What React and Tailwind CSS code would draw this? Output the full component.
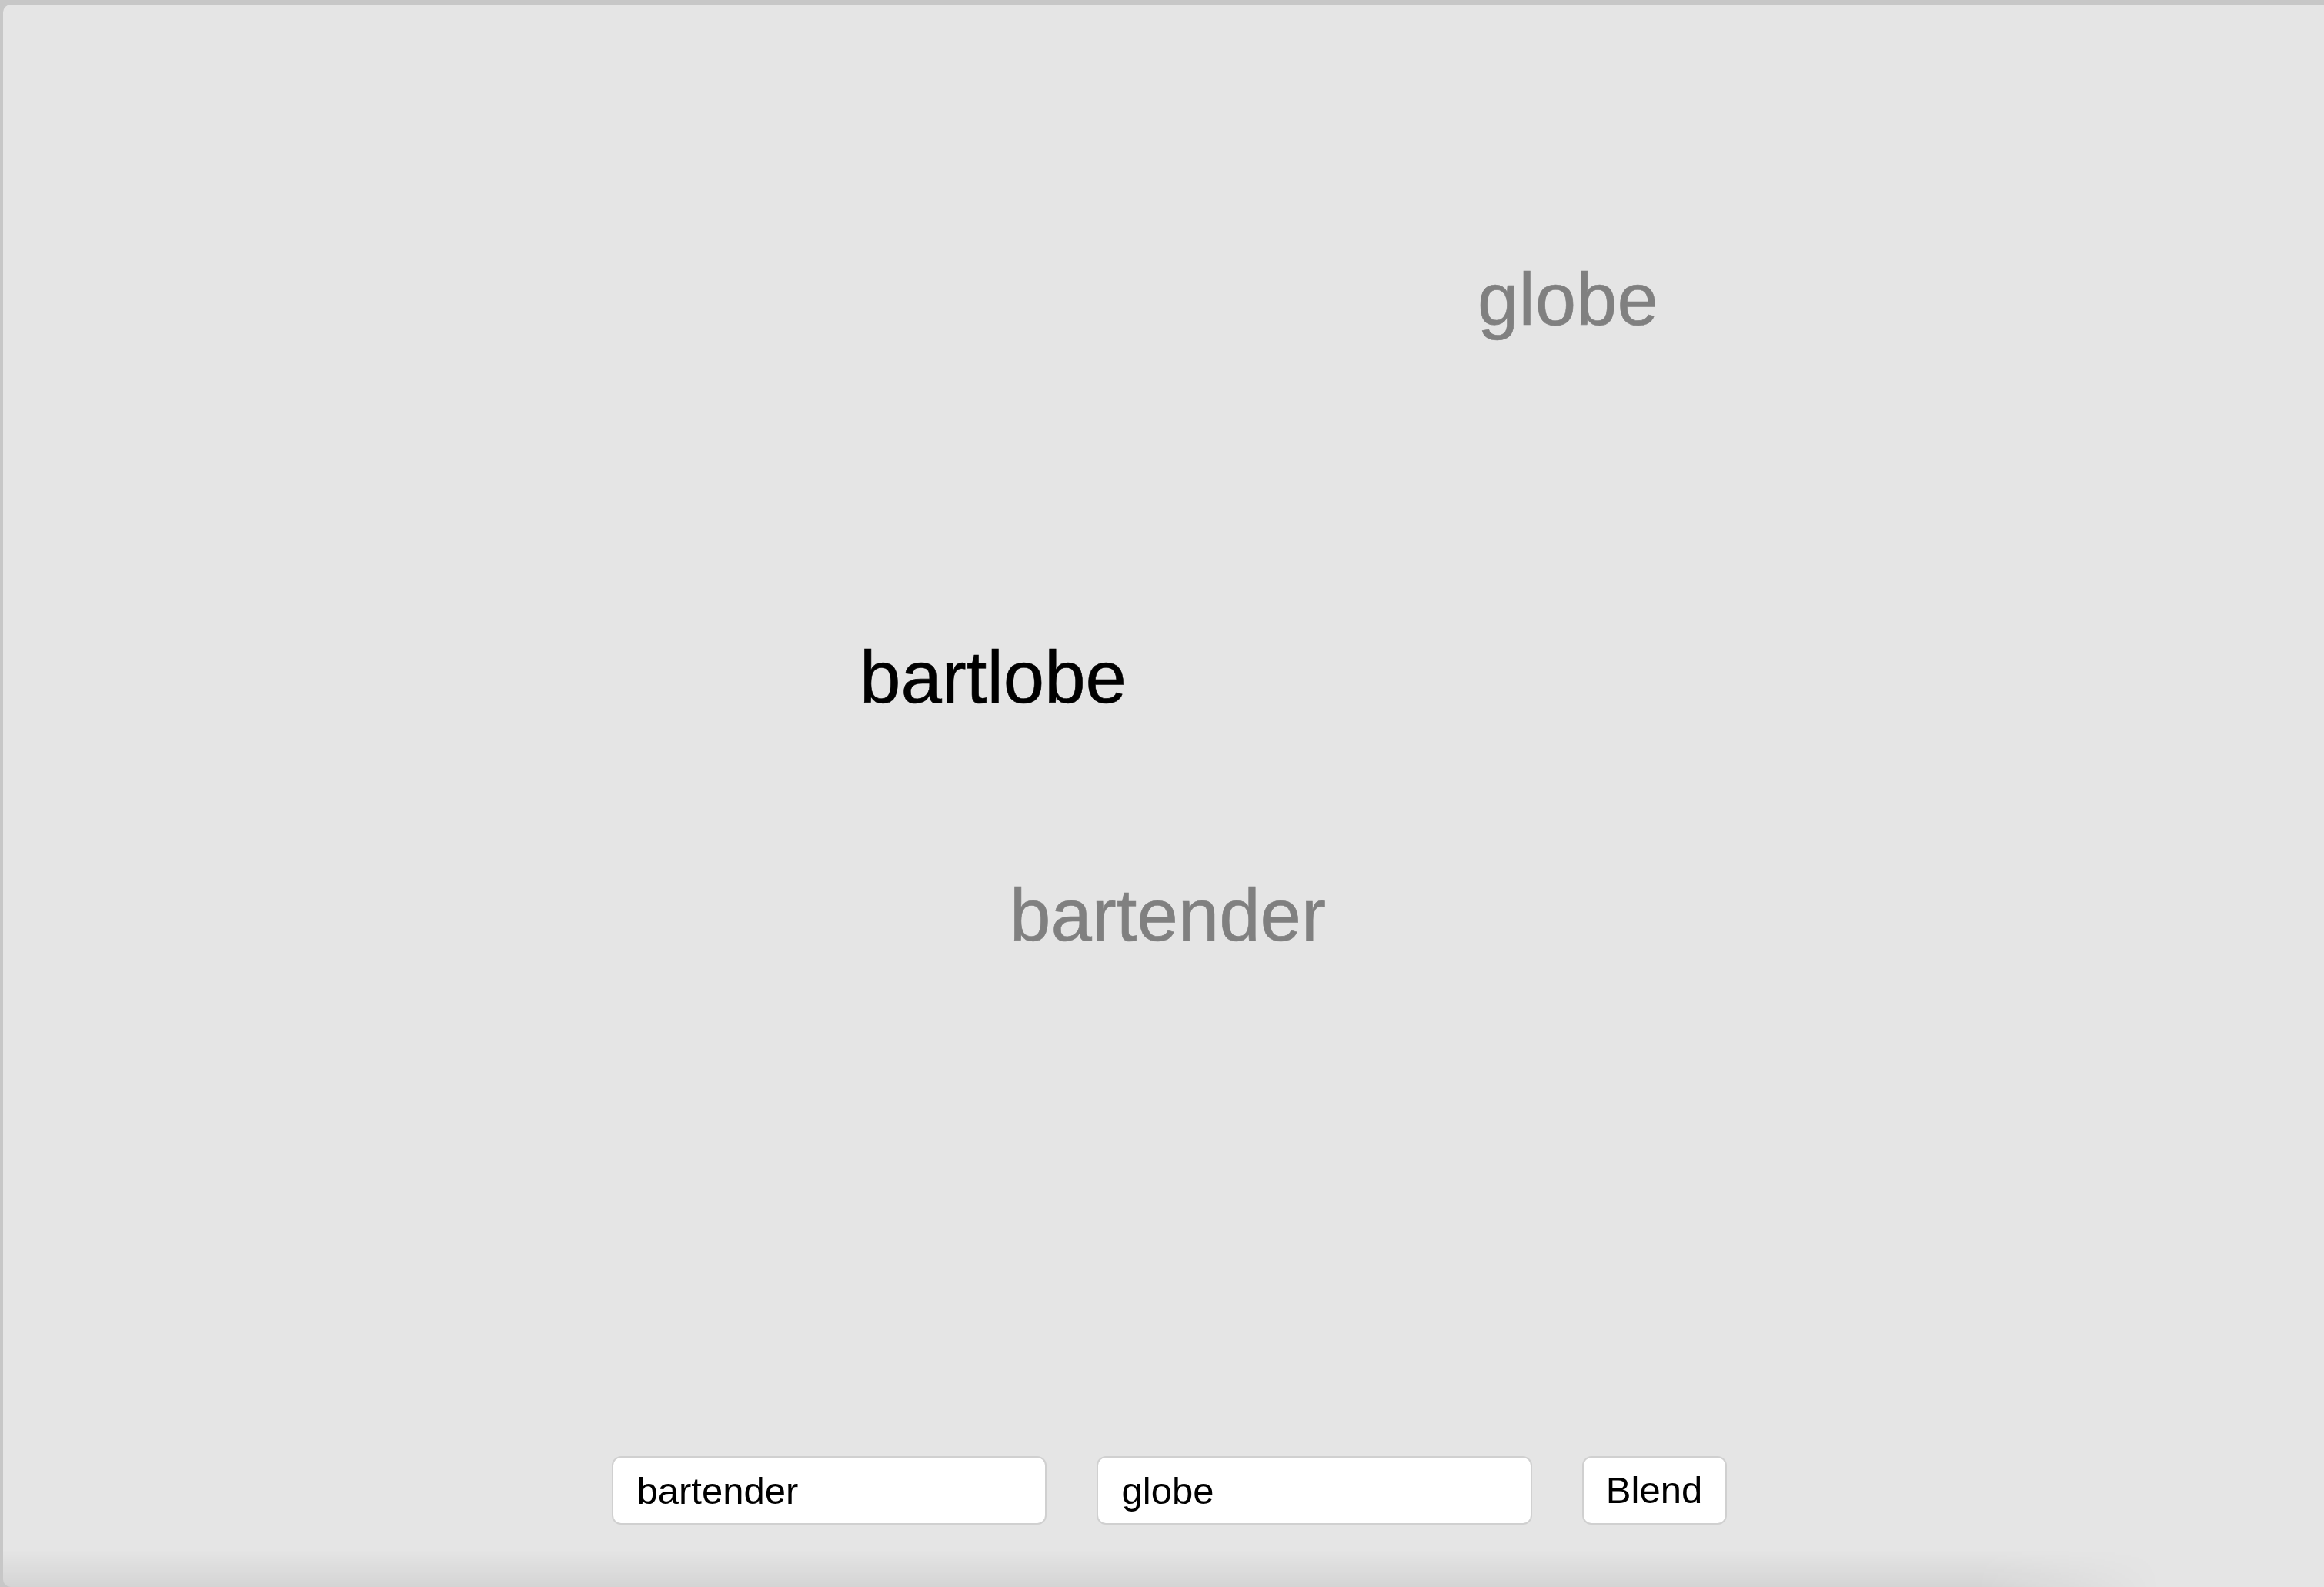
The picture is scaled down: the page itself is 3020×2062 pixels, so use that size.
import { useState } from 'react'

const WORDS = [
  { text: 'globe',     cls: 'left-[1916px] top-[335px] text-[#808080]' },
  { text: 'bartlobe',  cls: 'left-[1113px] top-[826px] text-black' },
  { text: 'bartender', cls: 'left-[1308px] top-[1135px] text-[#808080]' },
]

const field = 'h-[89px] bg-white border-2 border-[#d0d0d0] rounded-[12px] text-[49px] text-black outline-none'

export default function App() {
  const [a, setA] = useState('bartender')
  const [b, setB] = useState('globe')

  return (
    <div className="h-[2062px] w-full bg-[#c7c7c7] pt-[6px] pl-[4px] font-['Liberation_Sans',Arial,sans-serif]">
      <div className="h-full flex flex-col bg-[#e5e5e5] rounded-tl-[10px] rounded-bl-[10px] overflow-hidden">

        {/* canvas */}
        <div className="relative flex-1">
          {WORDS.map(w => (
            <span key={w.text}
                  className={`absolute whitespace-nowrap text-[96px] leading-none [-webkit-text-stroke:0.6px_currentColor] ${w.cls}`}>
              {w.text}
            </span>
          ))}
        </div>

        {/* form */}
        <div className="flex justify-center gap-[65px] pl-[14px]">
          <input value={a} onChange={e => setA(e.target.value)} className={`${field} w-[565px] px-[31px]`} />
          <input value={b} onChange={e => setB(e.target.value)} className={`${field} w-[566px] px-[31px]`} />
          <button className={`${field} w-[188px]`}>Blend</button>
        </div>

        {/* bottom shadow */}
        <div className="h-[81px] bg-[linear-gradient(to_bottom,transparent_40%,rgba(0,0,0,0.07))] [mask-image:linear-gradient(to_right,black_85%,transparent_93%)]" />
      </div>
    </div>
  )
}
